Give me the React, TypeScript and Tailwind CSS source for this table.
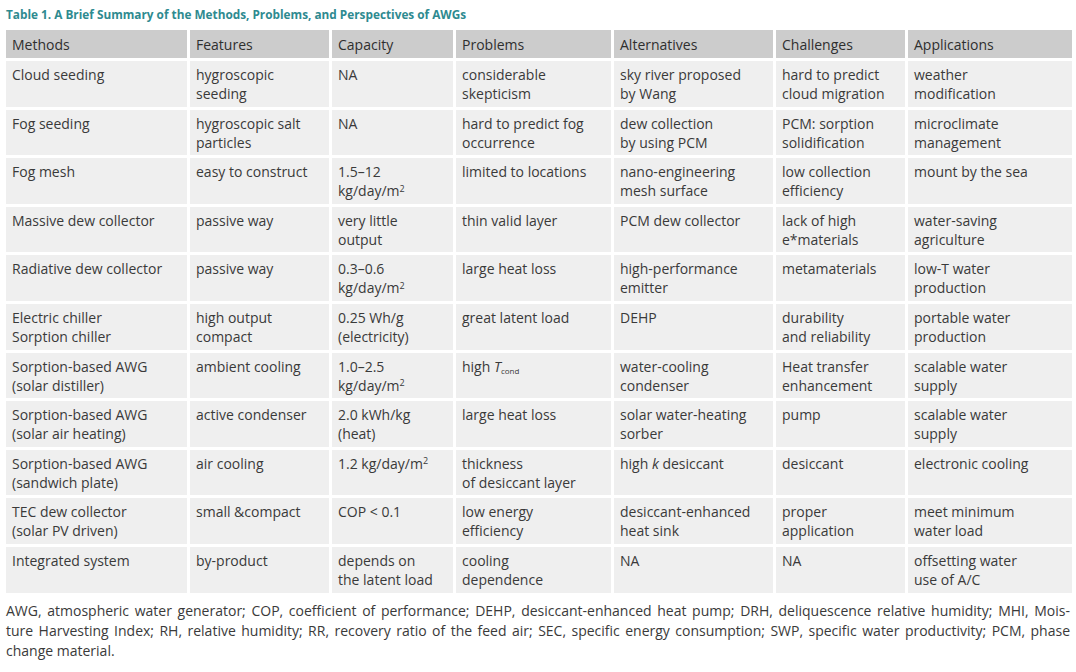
import type { ReactNode } from "react"

const cols = ["Methods", "Features", "Capacity", "Problems", "Alternatives", "Challenges", "Applications"]
const widths = "181px 139px 121px 155px 159px 129px 164px"

const M2 = () => (
  <>
    kg/day/m<sup className="text-[9px] leading-none">2</sup>
  </>
)

const rows: ReactNode[][] = [
  ["Cloud seeding", "hygroscopic\nseeding", "NA", "considerable\nskepticism", "sky river proposed\nby Wang", "hard to predict\ncloud migration", "weather\nmodification"],
  ["Fog seeding", "hygroscopic salt\nparticles", "NA", "hard to predict fog\noccurrence", "dew collection\nby using PCM", "PCM: sorption\nsolidification", "microclimate\nmanagement"],
  ["Fog mesh", "easy to construct", <>1.5–12<br /><M2 /></>, "limited to locations", "nano-engineering\nmesh surface", "low collection\nefficiency", "mount by the sea"],
  ["Massive dew collector", "passive way", "very little\noutput", "thin valid layer", "PCM dew collector", "lack of high\ne*materials", "water-saving\nagriculture"],
  ["Radiative dew collector", "passive way", <>0.3–0.6<br /><M2 /></>, "large heat loss", "high-performance\nemitter", "metamaterials", "low-T water\nproduction"],
  ["Electric chiller\nSorption chiller", "high output\ncompact", "0.25 Wh/g\n(electricity)", "great latent load", "DEHP", "durability\nand reliability", "portable water\nproduction"],
  ["Sorption-based AWG\n(solar distiller)", "ambient cooling", <>1.0–2.5<br /><M2 /></>, <>high <i>T</i><sub className="text-[8px]">cond</sub></>, "water-cooling\ncondenser", "Heat transfer\nenhancement", "scalable water\nsupply"],
  ["Sorption-based AWG\n(solar air heating)", "active condenser", "2.0 kWh/kg\n(heat)", "large heat loss", "solar water-heating\nsorber", "pump", "scalable water\nsupply"],
  ["Sorption-based AWG\n(sandwich plate)", "air cooling", <>1.2 <M2 /></>, "thickness\nof desiccant layer", <>high <i>k</i> desiccant</>, "desiccant", "electronic cooling"],
  ["TEC dew collector\n(solar PV driven)", "small &compact", "COP < 0.1", "low energy\nefficiency", "desiccant-enhanced\nheat sink", "proper\napplication", "meet minimum\nwater load"],
  ["Integrated system", "by-product", "depends on\nthe latent load", "cooling\ndependence", "NA", "NA", "offsetting water\nuse of A/C"],
]

export default function App() {
  return (
    <div
      className="w-[1076px] h-[672px] bg-white text-[#3a3a3a] overflow-hidden"
      style={{ fontFamily: "'Open Sans', 'Noto Sans', sans-serif" }}
    >
      <div className="pl-[6px] pt-[5px] h-[30px] text-[11.8px] font-bold text-[#2e8a90] leading-[18px]">
        Table 1. A Brief Summary of the Methods, Problems, and Perspectives of AWGs
      </div>

      <div className="ml-[6px] grid gap-x-[3px] gap-y-[3px] text-[14px] leading-[19px]" style={{ gridTemplateColumns: widths }}>
        {cols.map((c) => (
          <div key={c} className="h-[28px] bg-[#cccccc] pl-[6px] pt-[5px] text-[#2f2f2f]">
            {c}
          </div>
        ))}
        {rows.map((r, i) =>
          r.map((cell, j) => (
            <div key={i + "-" + j} className="h-[45.6px] bg-[#efefef] pl-[6px] pt-[4px] whitespace-pre-line">
              {cell}
            </div>
          ))
        )}
      </div>

      <div className="mx-[6px] mt-[8px] text-[14px] leading-[20px] text-[#3a3a3a]">
        <div className="text-justify [text-align-last:justify]">
          AWG, atmospheric water generator; COP, coefficient of performance; DEHP, desiccant-enhanced heat pump; DRH, deliquescence relative humidity; MHI, Mois-
        </div>
        <div className="text-justify [text-align-last:justify]">
          ture Harvesting Index; RH, relative humidity; RR, recovery ratio of the feed air; SEC, specific energy consumption; SWP, specific water productivity; PCM, phase
        </div>
        <div>change material.</div>
      </div>
    </div>
  )
}
